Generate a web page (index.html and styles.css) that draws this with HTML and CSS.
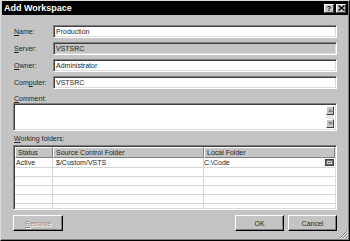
FILE: index.html
```html
<!DOCTYPE html>
<html>
<head>
<meta charset="utf-8">
<link rel="stylesheet" href="styles.css">
</head>
<body>
<div class="window">
  <div class="titlebar">
    <span class="title">Add Workspace</span>
    <div class="tbtns">
      <span class="tbtn help">?</span>
      <span class="tbtn close"><svg width="7" height="6" viewBox="0 0 7 6"><path d="M0.5 0.5 L6.5 5.5 M6.5 0.5 L0.5 5.5" stroke="#000" stroke-width="1.4"/></svg></span>
    </div>
  </div>
  <div class="content">
    <div class="fields">
      <label class="flabel"><u>N</u>ame:</label><div class="input">Production</div>
      <label class="flabel"><u>S</u>erver:</label><div class="input disabled">VSTSRC</div>
      <label class="flabel"><u>O</u>wner:</label><div class="input">Administrator</div>
      <label class="flabel">Com<u>p</u>uter:</label><div class="input">VSTSRC</div>
    </div>
    <div class="lbl lbl-comment"><u>C</u>omment:</div>
    <div class="textarea">
      <div class="tbody"></div>
      <div class="vscroll">
        <span class="sbtn"><svg width="5" height="3" viewBox="0 0 5 3"><path d="M0 3 L2.5 0 L5 3 Z" fill="#808080"/></svg></span>
        <span class="strack"></span>
        <span class="sbtn"><svg width="5" height="3" viewBox="0 0 5 3"><path d="M0 0 L2.5 3 L5 0 Z" fill="#808080"/></svg></span>
      </div>
    </div>
    <div class="lbl lbl-wf"><u>W</u>orking folders:</div>
    <div class="grid">
      <div class="row head">
        <div class="cell c1">Status</div>
        <div class="cell c2">Source Control Folder</div>
        <div class="cell c3">Local Folder</div>
      </div>
      <div class="row first">
        <div class="cell c1">Active</div>
        <div class="cell c2">$/Custom/VSTS</div>
        <div class="cell c3 local"><span>C:\Code</span><span class="browse"><span class="bicon"></span></span></div>
      </div>
      <div class="row"><div class="cell c1"></div><div class="cell c2"></div><div class="cell c3"></div></div>
      <div class="row"><div class="cell c1"></div><div class="cell c2"></div><div class="cell c3"></div></div>
      <div class="row"><div class="cell c1"></div><div class="cell c2"></div><div class="cell c3"></div></div>
      <div class="row"><div class="cell c1"></div><div class="cell c2"></div><div class="cell c3"></div></div>
      <div class="row"><div class="cell c1"></div><div class="cell c2"></div><div class="cell c3"></div></div>
    </div>
    <div class="buttons">
      <span class="btn disabled"><u>R</u>emove</span>
      <span class="spacer"></span>
      <span class="btn">OK</span>
      <span class="btn">Cancel</span>
    </div>
  </div>
  <svg class="grip" width="9" height="9" viewBox="0 0 9 9">
    <path d="M8 1 L1 8 M8 4 L4 8 M8 7 L7 8" stroke="#808080" stroke-width="1"/>
    <path d="M9 1 L1 9 M9 4 L4 9" stroke="#fff" stroke-width="0.7"/>
  </svg>
</div>
</body>
</html>
```
FILE: styles.css
```css
* { box-sizing: border-box; }
html, body { margin: 0; padding: 0; background: #c4c4c4; }
body {
  width: 350px;
  height: 241px;
  overflow: hidden;
  font-family: "Liberation Sans", Arial, sans-serif;
  font-size: 7px;
  color: #262626;
}
u { text-decoration: underline; text-underline-offset: 1px; }
.window {
  position: relative;
  width: 350px;
  height: 241px;
  background: #c4c4c4;
  border: 1px solid;
  border-color: #dcdcdc #000 #000 #dcdcdc;
  box-shadow: inset -1px -1px #808080;
  padding: 0 1px;
}
.titlebar {
  height: 14px;
  background: #000;
  display: flex;
  align-items: center;
  justify-content: space-between;
  padding: 0 2px 0 2px;
}
.title {
  color: #fff;
  font-weight: bold;
  font-size: 9px;
  line-height: 14px;
}
.tbtns { display: flex; gap: 2px; }
.tbtn {
  width: 10px;
  height: 9px;
  background: #c4c4c4;
  border: 1px solid;
  border-color: #fff #404040 #404040 #fff;
  display: flex;
  align-items: center;
  justify-content: center;
  font-weight: bold;
  font-size: 7px;
  line-height: 7px;
  color: #000;
}
.content {
  padding: 10px 11px 0 11px;
  display: flex;
  flex-direction: column;
}
.fields {
  display: grid;
  grid-template-columns: 40px 1fr;
  row-gap: 4px;
  align-items: center;
}
.flabel { line-height: 9px; padding-left: 1px; }
.input {
  height: 13px;
  background: #fff;
  border: 1px solid;
  border-color: #808080 #fff #fff #808080;
  box-shadow: inset 1px 1px #404040, inset -1px -1px #dcdcdc;
  padding: 1px 2px;
  line-height: 9px;
}
.input.disabled { background: #c4c4c4; }
.lbl { line-height: 9px; height: 9px; padding-left: 1px; }
.lbl-comment { margin-top: 5px; }
.lbl-wf { margin-top: 3px; }
.textarea {
  height: 28px;
  background: #fff;
  border: 1px solid;
  border-color: #808080 #fff #fff #808080;
  box-shadow: inset 1px 1px #404040, inset -1px -1px #dcdcdc;
  padding: 2px;
  display: flex;
}
.tbody { flex: 1; }
.vscroll {
  width: 8px;
  display: flex;
  flex-direction: column;
}
.sbtn {
  height: 9px;
  background: #c4c4c4;
  border: 1px solid;
  border-color: #fff #404040 #404040 #fff;
  display: flex;
  align-items: center;
  justify-content: center;
}
.strack { flex: 1; background: #e6e6e6; }
.grid {
  margin-top: 2px;
  height: 65px;
  overflow: hidden;
  background: #fff;
  border: 1px solid;
  border-color: #808080 #fff #fff #808080;
  box-shadow: inset 1px 1px #404040, inset -1px -1px #dcdcdc;
  padding: 1px;
}
.row {
  display: grid;
  grid-template-columns: 38px 151px 1fr;
  height: 9px;
  border-bottom: 1px solid #d6d6d6;
}
.row.head {
  height: 11px;
  border-bottom: 0;
  background: #c4c4c4;
}
.row.first { height: 10px; }
.cell {
  line-height: 8px;
  padding-left: 3px;
  border-right: 1px solid #d6d6d6;
  white-space: nowrap;
  overflow: hidden;
}
.cell.c3 { border-right: 0; }
.head .cell {
  line-height: 10px;
  border-top: 1px solid #fff;
  border-left: 1px solid #fff;
  border-right: 1px solid #808080;
  border-bottom: 1px solid #808080;
  padding-left: 2px;
}
.head .cell.c3 { border-right: 1px solid #808080; }
.first .cell { line-height: 9px; }
.first .c1 { padding-left: 1px; }
.local {
  display: flex;
  justify-content: space-between;
  align-items: center;
  padding-left: 0;
}
.browse {
  width: 9px;
  height: 7px;
  background: #6a6a6a;
  border: 1px solid #404040;
  display: flex;
  align-items: center;
  justify-content: center;
  margin-right: 1px;
}
.bicon {
  width: 5px;
  height: 3px;
  border: 1px solid #d0d0d0;
}
.buttons {
  margin-top: 5px;
  display: flex;
  gap: 4px;
}
.spacer { flex: 1; }
.btn {
  width: 49px;
  height: 16px;
  background: #c4c4c4;
  border: 1px solid;
  border-color: #fff #000 #000 #fff;
  box-shadow: inset -1px -1px #808080;
  display: flex;
  align-items: center;
  justify-content: center;
  line-height: 9px;
}
.btn.disabled {
  width: 50px;
  color: #8a8a8a;
  text-shadow: 1px 1px #fff;
}
.grip {
  position: absolute;
  right: 1px;
  bottom: 1px;
}
```
